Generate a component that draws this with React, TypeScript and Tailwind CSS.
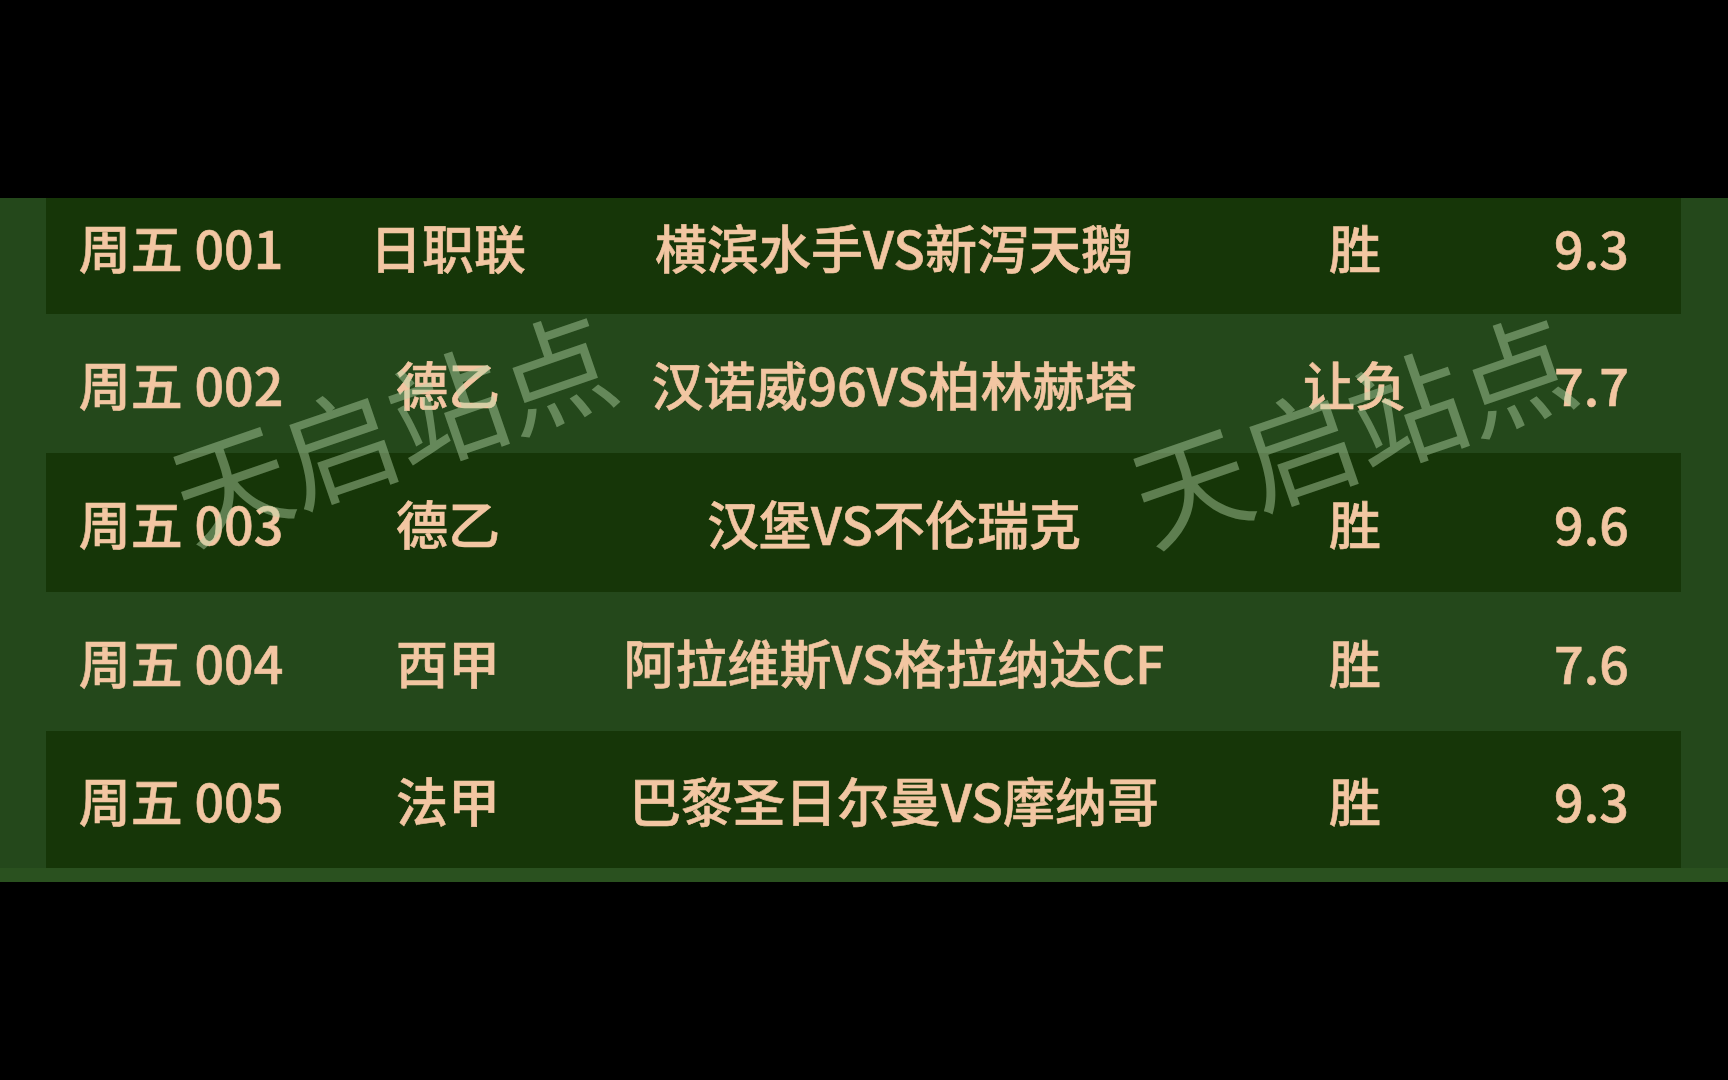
import React from "react";

const rows = [
  { id: "周五 001", league: "日职联", match: "横滨水手VS新泻天鹅", pick: "胜", odds: "9.3", dark: true, h: "h-[116px] pb-[18px]" },
  { id: "周五 002", league: "德乙", match: "汉诺威96VS柏林赫塔", pick: "让负", odds: "7.7", dark: false, h: "h-[139px]" },
  { id: "周五 003", league: "德乙", match: "汉堡VS不伦瑞克", pick: "胜", odds: "9.6", dark: true, h: "h-[139px]" },
  { id: "周五 004", league: "西甲", match: "阿拉维斯VS格拉纳达CF", pick: "胜", odds: "7.6", dark: false, h: "h-[139px]" },
  { id: "周五 005", league: "法甲", match: "巴黎圣日尔曼VS摩纳哥", pick: "胜", odds: "9.3", dark: true, h: "h-[137px]" },
];

function Watermark({ pos }: { pos: string }) {
  return (
    <div
      className={`pointer-events-none absolute ${pos} -translate-x-1/2 -translate-y-1/2 -rotate-[19deg] text-[116px] leading-none font-normal tracking-[-2px] text-[#b5d6a8]/45 whitespace-nowrap`}
    >
      天启站点
    </div>
  );
}

export default function App() {
  return (
    <div
      className="w-[1728px] h-[1080px] bg-black flex flex-col"
      style={{ fontFamily: '"Noto Sans CJK SC", "Noto Sans", sans-serif' }}
    >
      <div className="h-[198px] shrink-0" />
      <div className="relative h-[684px] shrink-0 bg-[#24481b] overflow-hidden flex flex-col">
        {rows.map((r) => (
          <div key={r.id} className="pl-[46px] pr-[47px]">
            <div
              className={`${r.h} ${r.dark ? "bg-[#163608]" : "bg-transparent"} grid grid-cols-[270px_264px_628px_294px_179px] items-center text-[52px] leading-none font-medium text-[#f2c6a2] [-webkit-text-stroke:0.6px_#f2c6a2]`}
            >
              <div className="text-center whitespace-nowrap">{r.id}</div>
              <div className="text-center whitespace-nowrap">{r.league}</div>
              <div className="text-center whitespace-nowrap">{r.match}</div>
              <div className="text-center whitespace-nowrap">{r.pick}</div>
              <div className="text-center whitespace-nowrap">{r.odds}</div>
            </div>
          </div>
        ))}
        <div className="h-[14px] bg-[#2a511f]" />

        <Watermark pos="left-[390px] top-[224px]" />
        <Watermark pos="left-[1350px] top-[226px]" />
      </div>
      <div className="flex-1" />
    </div>
  );
}
